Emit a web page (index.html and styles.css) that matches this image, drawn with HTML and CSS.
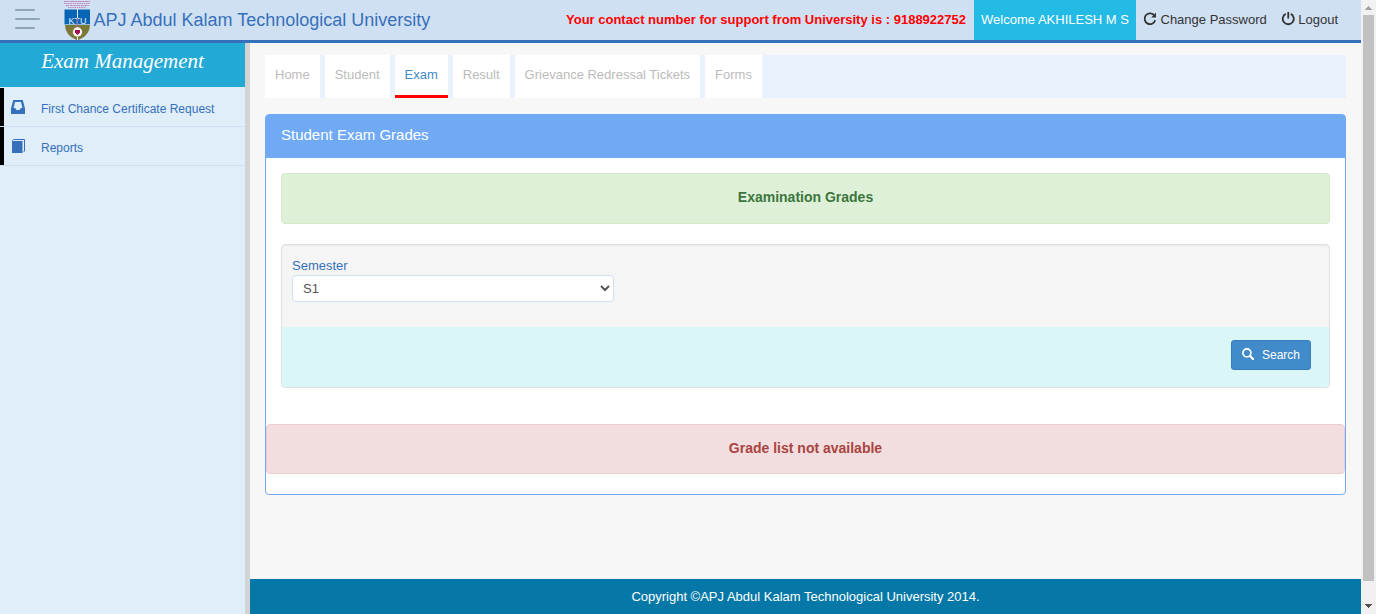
FILE: index.html
```html
<!DOCTYPE html>
<html lang="en">
<head>
<meta charset="utf-8">
<title>APJ Abdul Kalam Technological University</title>
<link rel="stylesheet" href="styles.css">
</head>
<body>
<div class="app">
  <header class="topbar">
    <div class="menu-toggle"><span></span><span class="long"></span><span></span></div>
    <svg class="logo" width="28" height="40" viewBox="0 0 28 40">
      <g fill="none" stroke="#c08abb" stroke-width="1.2"><path d="M1 1.500H27" stroke-dasharray="3 .5"/><path d="M1 3.500H27" stroke-dasharray="1.500 .7"/><path d="M3 5.500H26" stroke-dasharray="3 .7"/><path d="M5 7.500H23" stroke-dasharray="1.500 .7"/></g>
      <path d="M1.500 9.500H27V25H1.500Z" fill="#0864b4"/>
      <path d="M2 25H27C26.500 31 24 35 20 37.500L14.500 40.500L9 37.500C5 35 2.500 31 2 25Z" fill="#7b7838"/>
      <path d="M14.500 9V28" stroke="#e5eefb" stroke-width="1"/>
      <text x="14.500" y="24" text-anchor="middle" textLength="18" class="logo-text">KTU</text>
      <path d="M1.500 24.500H27" stroke="#d5e2f5" stroke-width=".7"/>
      <path d="M14.500 18V27" stroke="#a7457c" stroke-width=".8"/>
      <circle cx="14.500" cy="32" r="4.700" fill="#f7f2f0"/>
      <path d="M12 30H17V32.500L14.500 35L12 32.500Z" fill="#a40b50"/>
      <path d="M14.500 37V40" stroke="#eee"/>
    </svg>
    <div class="brand">APJ Abdul Kalam Technological University</div>
    <div class="support">Your contact number for support from University is : 9188922752</div>
    <div class="welcome">Welcome AKHILESH M S</div>
    <a class="toplink change"><svg width="14" height="14" viewBox="0 0 14 14"><path d="M10.900 3A5.400 5.400 0 1 0 12.200 8.300" fill="none" stroke="#333" stroke-width="1.800"/><path d="M13 .6V5.400H8.200Z" fill="#333"/></svg>Change Password</a>
    <a class="toplink"><svg width="14" height="14" viewBox="0 0 14 14"><path d="M4.700 1.900A5.500 5.500 0 1 0 9.800 1.900" fill="none" stroke="#333" stroke-width="1.800"/><path d="M7.250 0V6.500" stroke="#333" stroke-width="1.800"/></svg>Logout</a>
  </header>
  <div class="columns">
    <aside class="sidebar">
      <h1 class="side-title">Exam Management</h1>
      <a class="side-item"><svg width="14" height="14" viewBox="0 0 14 14"><path fill-rule="evenodd" d="M2.200 0H11.800L14 8.500V14H0V8.500ZM4 2L2.600 8H4.200L5.500 10H8.500L9.800 8H11.400L10 2Z" fill="#3670bb"/></svg><span>First Chance Certificate Request</span></a>
      <a class="side-item"><svg width="14" height="14" viewBox="0 0 14 14"><path d="M1 2H11.500V14H1Z" fill="#3670bb"/><path d="M1.500 2.500V1.500L2.500 .5H13.500V12L12.500 13" fill="none" stroke="#3670bb" stroke-width="1"/></svg><span>Reports</span></a>
    </aside>
    <main class="content">
      <nav class="tabs"><a>Home</a><a>Student</a><a class="active">Exam</a><a>Result</a><a>Grievance Redressal Tickets</a><a>Forms</a></nav>
      <section class="panel">
        <h2 class="panel-title">Student Exam Grades</h2>
        <div class="panel-body">
          <div class="alert success">Examination Grades</div>
          <form class="well">
            <div class="fields">
              <label for="semester">Semester</label>
              <select id="semester"><option>S1</option></select>
            </div>
            <div class="actions">
              <button type="button" class="search"><svg width="12" height="12" viewBox="0 0 12 12"><circle cx="4.900" cy="4.900" r="4" fill="none" stroke="#fff" stroke-width="1.700"/><path d="M8 8L11 11" stroke="#fff" stroke-width="2.100" stroke-linecap="round"/></svg>Search</button>
            </div>
          </form>
        </div>
        <div class="alert danger">Grade list not available</div>
      </section>
      <footer class="footer">Copyright ©APJ Abdul Kalam Technological University 2014.</footer>
    </main>
  </div>
</div>
<div class="scrollbar">
  <svg width="15" height="15" viewBox="0 0 15 15" shape-rendering="crispEdges"><path d="M4 10L7.500 6L11 10Z" fill="#a3a3a3"/></svg>
  <div class="thumb"></div>
  <svg width="15" height="15" viewBox="0 0 15 15" shape-rendering="crispEdges"><path d="M4 5L7.500 9L11 5Z" fill="#505050"/></svg>
</div>
</body>
</html>
```

FILE: styles.css
```css
* { box-sizing: border-box; }
body {
  margin: 0;
  height: 614px;
  display: flex;
  overflow: hidden;
  background: #f7f7f7;
  font: 13px/20px "Liberation Sans", Arial, sans-serif;
}
svg { flex: none; }
.app { width: 1361px; display: flex; flex-direction: column; }
.topbar {
  height: 43px;
  flex: none;
  display: flex;
  align-items: center;
  background: #d0e0f3;
  border-bottom: 3px solid #3670bb;
}
.menu-toggle { width: 63px; padding: 0 0 3px 15px; display: flex; flex-direction: column; gap: 7px; }
.menu-toggle span { width: 20px; height: 2px; background: #8fa4b8; border-radius: 1px; }
.menu-toggle .long { width: 25px; }
.logo-text { font: 9px "Liberation Sans", sans-serif; fill: #e5eefb; }
.brand { margin-left: 2.500px; font-size: 18px; color: #3670bb; flex: 1; white-space: nowrap; }
.support { font-weight: bold; color: #f00; margin-right: 8px; }
.welcome { width: 162px; height: 40px; line-height: 40px; text-align: center; color: #fff; background: #23bae6; margin-right: 7px; }
.toplink { display: flex; gap: 3px; color: #333; margin-right: 23px; }
.toplink svg { margin-top: 2px; }
.change { gap: 3.500px; margin-right: 14.500px; }
.columns { flex: 1; display: flex; min-height: 0; }
.sidebar { width: 250px; background: #e0eefa; border-right: 5px solid #d3d3d3; }
.side-title {
  margin: 0 0 1px;
  height: 44px;
  padding-top: 5px;
  font: italic 21px/26px "Liberation Serif", serif;
  text-align: center;
  color: #fff;
  background: #23a9d5;
}
.side-item {
  height: 39px;
  display: flex;
  align-items: center;
  gap: 16px;
  padding-left: 11px;
  box-shadow: inset 4px 0 #000;
  border-bottom: 1px solid #cfe0f4;
  color: #3670bb;
  font-size: 12px;
}
.side-item span { padding-top: 3px; }
.content { flex: 1; padding-top: 12px; display: flex; flex-direction: column; }
.tabs { height: 43px; margin: 0 15px 16px; display: flex; gap: 5px; background: #e9f1fd; }
.tabs a { padding: 10px 10px 0; background: #fff; color: #bbb; }
.tabs .active { color: #428bca; border-bottom: 3px solid #f00; }
.panel { height: 381px; margin: 0 15px; background: #fff; border: 1px solid #70aaf5; border-radius: 4px; }
.panel-title { margin: 0; height: 43px; padding: 10px 15px; font-size: 15px; font-weight: normal; color: #fff; background: #70aaf5; }
.panel-body { padding: 15px 15px 36px; }
.alert { padding: 13px; text-align: center; font-size: 14px; font-weight: bold; border: 1px solid; border-radius: 4px; }
.success { height: 51px; margin-bottom: 20px; color: #3c763d; background: #dff0d8; border-color: #d6e9c6; }
.danger { height: 50px; color: #a94442; background: #f2dede; border-color: #ebccd1; }
.well { height: 144px; background: #f5f5f5; border: 1px solid #e0e0e0; border-radius: 4px; box-shadow: inset 0 1px 1px rgba(0,0,0,.05); overflow: hidden; }
.fields { height: 82px; padding: 11px 10px; display: flex; flex-direction: column; align-items: flex-start; }
label { color: #3670bb; line-height: 19px; }
select {
  width: 322px;
  height: 27px;
  padding: 0 6px;
  border: 1px solid #cfe0f5;
  border-radius: 4px;
  color: #555;
  background: #fff;
  font: 13px "Liberation Sans", sans-serif;
}
.actions { height: 60px; padding: 13px 18px; display: flex; justify-content: flex-end; background: #dbf6f7; }
.search {
  width: 80px;
  height: 30px;
  padding: 0 10px;
  display: flex;
  align-items: center;
  gap: 8px;
  color: #fff;
  background: #428bca;
  border: 1px solid #357ebd;
  border-radius: 3px;
  font: 12px "Liberation Sans", sans-serif;
}
.search svg { margin-bottom: 2px; }
.footer { margin-top: auto; height: 35px; line-height: 35px; text-align: center; color: #fff; background: #0578a7; }
.scrollbar { width: 15px; display: flex; flex-direction: column; align-items: center; background: #f1f1f1; }
.thumb { width: 11px; height: 566px; margin-bottom: 18px; background: #c1c1c1; }
```
